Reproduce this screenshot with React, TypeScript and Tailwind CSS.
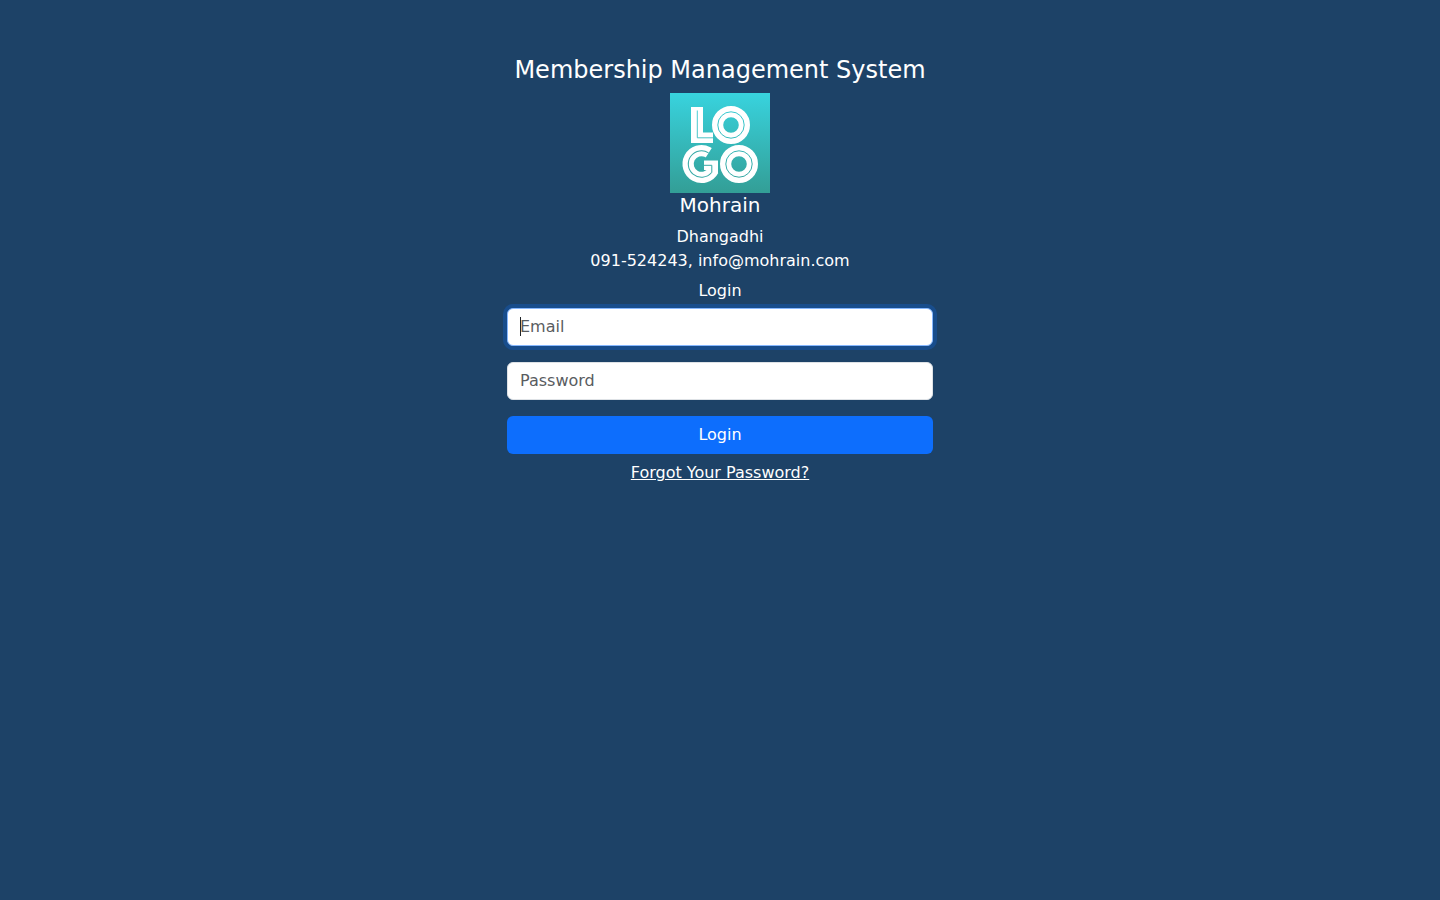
import React from "react";

function LogoRing({ cx, cy }: { cx: number; cy: number }) {
  return (
    <g fill="none">
      <circle cx={cx} cy={cy} r="13.4" stroke="#fff" strokeWidth="11.2" />
      <circle
        cx={cx}
        cy={cy}
        r="13.2"
        stroke="url(#logo-bg)"
        strokeWidth="1"
      />
    </g>
  );
}

function Logo() {
  return (
    <svg
      className="block size-[100px]"
      viewBox="0 0 100 100"
      role="img"
      aria-label="Mohrain"
    >
      <defs>
        <linearGradient
          id="logo-bg"
          gradientUnits="userSpaceOnUse"
          x1="0"
          y1="0"
          x2="0"
          y2="100"
        >
          <stop offset="0" stopColor="#38d3de" />
          <stop offset="1" stopColor="#339e96" />
        </linearGradient>
      </defs>
      <rect width="100" height="100" fill="url(#logo-bg)" />
      <rect x="21" y="14" width="12" height="36" fill="#fff" />
      <rect x="21" y="39.5" width="22" height="10.5" fill="#fff" />
      <polyline
        points="27.3,17.5 27.3,44.8 43,44.8"
        fill="none"
        stroke="url(#logo-bg)"
        strokeWidth="0.9"
      />
      <LogoRing cx={61} cy={32} />
      <g fill="none">
        <circle
          cx="31.5"
          cy="71"
          r="13.4"
          stroke="#fff"
          strokeWidth="11.2"
          pathLength="360"
          strokeDasharray="275 85"
          transform="rotate(28 31.5 71)"
        />
        <rect x="34" y="67.5" width="14" height="9.5" fill="#fff" />
        <rect x="37.5" y="70" width="10.5" height="10" fill="#fff" />
        <circle
          cx="31.5"
          cy="71"
          r="13.2"
          stroke="#35a9a6"
          strokeWidth="1"
          pathLength="360"
          strokeDasharray="262 98"
          transform="rotate(40 31.5 71)"
        />
        <polyline
          points="34,72.3 41.8,72.3 41.8,79.6"
          stroke="#35a9a6"
          strokeWidth="1"
        />
      </g>
      <LogoRing cx={69} cy={71} />
    </svg>
  );
}

const field =
  "block w-full rounded-md border border-[#dee2e6] bg-white px-3 py-1.5 text-base text-[#212529] outline-none placeholder:text-[#595c5f] focus:border-[#86b7fe] focus:ring-4 focus:ring-[#0d6efd]/25";

export default function App() {
  const [email, setEmail] = React.useState("");

  return (
    <main className="flex min-h-screen flex-col items-center bg-[#1d4267] pt-14 font-['DejaVu_Sans',sans-serif] text-base text-white">
      <div className="flex w-full max-w-[450px] flex-col items-center px-3 text-center">
        <h1 className="mb-2 text-2xl leading-[29px]">
          Membership Management System
        </h1>
        <Logo />
        <h2 className="mb-2 text-xl leading-6">Mohrain</h2>
        <p>Dhangadhi</p>
        <p className="mb-2">091-524243, info@mohrain.com</p>
        <h3 className="mb-2 leading-[19px]">Login</h3>
        <form
          className="flex w-full flex-col gap-4"
          onSubmit={(event) => event.preventDefault()}
        >
          <div className="group relative">
            <input
              className={`${field} placeholder-shown:caret-transparent`}
              type="email"
              name="email"
              placeholder="Email"
              aria-label="Email"
              value={email}
              onChange={(event) => setEmail(event.target.value)}
              autoFocus
            />
            {email === "" && (
              <span
                aria-hidden="true"
                className="pointer-events-none absolute top-[9px] left-[13px] hidden h-[19px] w-px bg-[#212529] group-focus-within:block"
              />
            )}
          </div>
          <input
            className={field}
            type="password"
            name="password"
            placeholder="Password"
            aria-label="Password"
          />
          <button
            type="submit"
            className="h-[38px] w-full cursor-pointer rounded-md bg-[#0d6efd] text-white"
          >
            Login
          </button>
        </form>
        <a href="#forgot-password" className="mt-[7px] underline">
          Forgot Your Password?
        </a>
      </div>
    </main>
  );
}
